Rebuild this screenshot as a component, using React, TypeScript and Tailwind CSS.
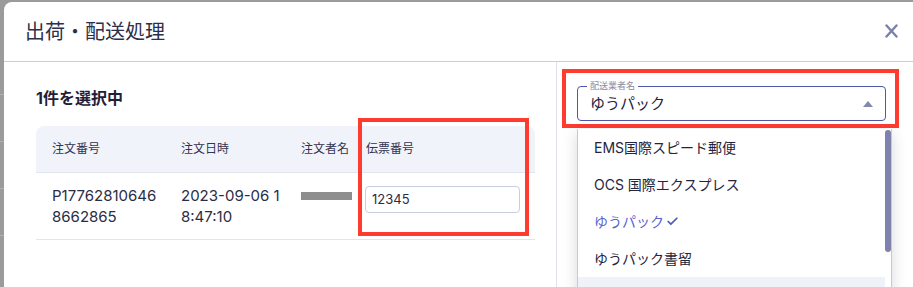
import { Check } from 'lucide-react'

const carriers = [
  { name: 'EMS国際スピード郵便' },
  { name: 'OCS 国際エクスプレス' },
  { name: 'ゆうパック', selected: true },
  { name: 'ゆうパック書留' },
  { name: '', hover: true },
]

const App = () => {
  return (
    <div className="w-[913px] h-[287px] overflow-hidden bg-[#9b9b9b] flex pt-[2px] font-['Inter','Noto_Sans_CJK_JP',sans-serif] text-[#2b2c45]">
      {/* backdrop strip */}
      <div className="w-[4px] flex flex-col pt-[92px] gap-[46px]">
        <div className="h-px bg-[#b0b0b0]" />
        <div className="h-px bg-[#b0b0b0]" />
        <div className="h-px bg-[#b0b0b0]" />
        <div className="h-px bg-[#b0b0b0]" />
      </div>

      {/* modal */}
      <div className="flex-1 bg-white rounded-tl-lg flex flex-col">
        {/* header */}
        <div className="h-[60px] shrink-0 flex items-center justify-between pl-[21px] pr-[15px] border-b border-[#c9cde3]">
          <h1 className="text-[20px] leading-none text-[#2e2f4a]">出荷・配送処理</h1>
          <svg width="13" height="14" viewBox="0 0 13 14" className="mt-[-1px]">
            <path d="M1.5 1.5 L11.5 12.5 M11.5 1.5 L1.5 12.5" stroke="#7b80aa" strokeWidth="2.4" strokeLinecap="round" fill="none" />
          </svg>
        </div>

        {/* body */}
        <div className="flex flex-1">
          {/* left */}
          <div className="w-[553px] shrink-0 border-r border-[#dfe2ee] pl-[32px] pt-[24px]">
            <div className="text-[16px] leading-[24px] font-bold text-[#1f2038]">1件を選択中</div>

            <div className="relative mt-4 w-[499px]">
              <div className="grid grid-cols-[145px_120px_65px_1fr] h-[47px] items-center bg-[#f0f3fa] rounded-t-lg border-b border-[#e2e5f0] text-[12px] text-[#33344e]">
                <div className="pl-4">注文番号</div>
                <div>注文日時</div>
                <div>注文者名</div>
                <div>伝票番号</div>
              </div>
              <div className="grid grid-cols-[145px_120px_65px_1fr] h-[67px] items-center border-b border-[#e3e5ee] text-[15px] leading-[21px]">
                <div className="pl-4">
                  <div>P17762810646</div>
                  <div>8662865</div>
                </div>
                <div>
                  <div>2023-09-06 1</div>
                  <div>8:47:10</div>
                </div>
                <div className="self-start pt-[19px]">
                  <div className="w-[51px] h-[8px] bg-[#8e8e8e] blur-[0.6px]" />
                </div>
                <div className="self-start pt-[13px]">
                  <div className="w-[155px] h-[27px] ml-[-1px] border border-[#c9cde0] rounded flex items-center pl-[6px] text-[13px] text-[#2b2c45]">
                    12345
                  </div>
                </div>
              </div>

              {/* annotation */}
              <div className="absolute left-[322px] top-[-8px] w-[171px] h-[118px] border-[4px] border-[#ff3b30]" />
            </div>
          </div>

          {/* right */}
          <div className="flex-1 pl-[20px] pr-[27px] pt-[24px]">
            <div className="relative">
              <div className="relative h-[35px] border border-[#4c58a6] rounded flex items-center justify-between pl-[12px] pr-[12px]">
                <span className="absolute left-[9px] top-[-7px] bg-white px-[3px] text-[9px] leading-[12px] text-[#8a8ca0]">配送業者名</span>
                <span className="text-[15px] text-[#23243c] mt-[1px]">ゆうパック</span>
                <svg width="10" height="6" viewBox="0 0 10 6">
                  <path d="M0 6 L5 0 L10 6 Z" fill="#8289ab" />
                </svg>
              </div>

              {/* annotation */}
              <div className="absolute left-[-15px] top-[-17px] w-[337px] h-[59px] border-[4px] border-[#ff3b30]" />

              {/* dropdown menu */}
              <div className="absolute left-0 top-[43px] w-[315px] h-[200px] bg-white border-l border-r border-[#c5c9df] shadow-[0_4px_14px_rgba(40,45,80,0.18)] flex">
                <div className="flex-1">
                  {carriers.map((c, i) => (
                    <div
                      key={i}
                      className={`h-[37px] flex items-center pl-[16px] text-[14px] ${c.hover ? 'bg-[#eff2f9]' : ''} ${c.selected ? 'text-[#5a64cc]' : 'text-[#24253d]'}`}
                    >
                      {c.name}
                      {c.selected && <Check size={13} strokeWidth={3.2} className="ml-[2px] text-[#4f5ab8]" />}
                    </div>
                  ))}
                </div>
                <div className="w-[6px] pt-[1px]">
                  <div className="h-[122px] bg-[#7e82ac] rounded-full" />
                </div>
              </div>
            </div>
          </div>
        </div>
      </div>
    </div>
  )
}

export default App
